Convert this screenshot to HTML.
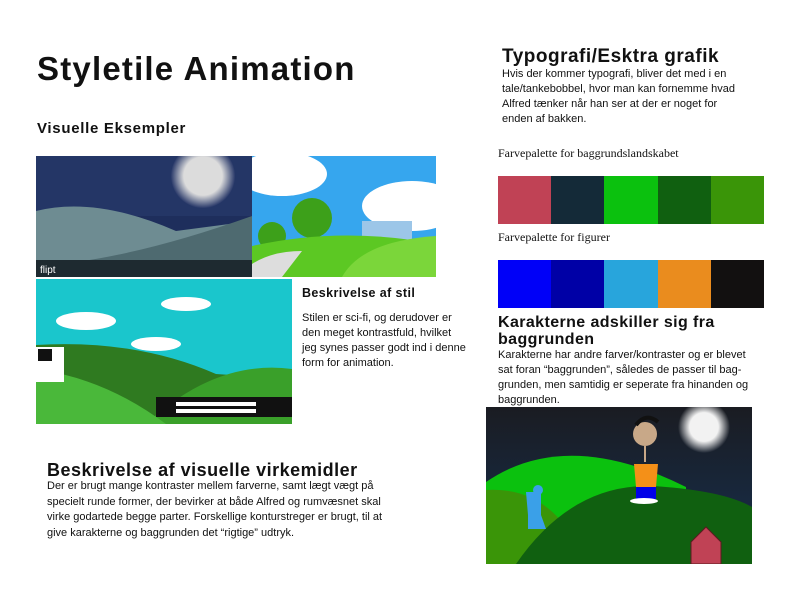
<!DOCTYPE html>
<html><head><meta charset="utf-8"><style>
*{margin:0;padding:0;box-sizing:border-box}
body{width:800px;height:600px;background:#fff;position:relative;overflow:hidden;font-family:"Liberation Sans",sans-serif;color:#111}
.a{position:absolute}
.h{font-weight:bold;letter-spacing:.7px;white-space:nowrap}
.p{font-size:11px;line-height:15px;white-space:nowrap}
.s{font-family:"Liberation Serif",serif;font-size:12px;white-space:nowrap}
.pal{display:flex;height:48px;width:266px}
.pal div{flex:1}
</style></head><body>
<div class="a h" style="left:37px;top:50px;font-size:33px;letter-spacing:1.2px">Styletile Animation</div>
<div class="a h" style="left:37px;top:120px;font-size:15px">Visuelle Eksempler</div>

<svg class="a" style="left:36px;top:156px" width="216" height="121">
<defs><radialGradient id="m"><stop offset="0.6" stop-color="#dcdcdc"/><stop offset="1" stop-color="#2a3a6a"/></radialGradient></defs>
<rect width="216" height="121" fill="#1e2e5c"/><rect width="216" height="60" fill="#2a3d70" opacity=".5"/>
<circle cx="167" cy="20" r="32" fill="url(#m)"/>
<path d="M0 55 Q60 40 140 75 L216 65 L216 121 L0 121Z" fill="#6e8c92"/>
<path d="M0 110 Q90 105 216 60 L216 121 L0 121Z" fill="#4e6a70"/>
<rect y="104" width="216" height="17" fill="#1e2a30"/>
<text x="4" y="117" fill="#fff" font-size="10" font-family="Liberation Sans">flipt</text>
</svg>
<svg class="a" style="left:252px;top:156px" width="184" height="121">
<rect width="184" height="121" fill="#36a6ee"/>
<ellipse cx="30" cy="18" rx="45" ry="22" fill="#fff"/><ellipse cx="160" cy="50" rx="50" ry="25" fill="#fff"/>
<rect x="110" y="65" width="50" height="25" fill="#9cc6e8"/>
<circle cx="60" cy="62" r="20" fill="#3da01a"/><circle cx="20" cy="80" r="14" fill="#3da01a"/>
<path d="M0 90 Q90 70 184 88 L184 121 L0 121Z" fill="#5cc823"/>
<path d="M0 121 L0 108 Q20 95 50 95 L30 121Z" fill="#ddd"/>
<path d="M90 121 Q110 85 184 80 L184 121Z" fill="#7bd63a"/>
</svg>
<svg class="a" style="left:36px;top:279px" width="256" height="145">
<rect width="256" height="145" fill="#1ac6cc"/>
<ellipse cx="50" cy="42" rx="30" ry="9" fill="#fff"/><ellipse cx="150" cy="25" rx="25" ry="7" fill="#fff"/><ellipse cx="120" cy="65" rx="25" ry="7" fill="#fff"/>
<path d="M0 66 Q100 60 180 95 L256 100 L256 145 L0 145Z" fill="#2f7a20"/>
<path d="M110 145 Q180 80 256 90 L256 145Z" fill="#3aa02a"/>
<path d="M0 90 Q70 100 130 145 L0 145Z" fill="#4ab83a"/>
<rect x="120" y="118" width="136" height="20" fill="#111"/><rect x="140" y="123" width="80" height="4" fill="#fff"/><rect x="140" y="130" width="80" height="4" fill="#fff"/>
<rect x="0" y="68" width="28" height="35" fill="#fff"/><rect x="2" y="70" width="14" height="12" fill="#111"/>
</svg>

<div class="a h" style="left:302px;top:286px;font-size:12.5px;letter-spacing:.4px">Beskrivelse af stil</div>
<div class="a p" style="left:302px;top:311px">Stilen er sci-fi, og derudover er<br>den meget kontrastfuld, hvilket<br>jeg synes passer godt ind i denne<br>form for animation.</div>

<div class="a h" style="left:47px;top:460px;font-size:18px;letter-spacing:.5px">Beskrivelse af visuelle virkemidler</div>
<div class="a p" style="left:47px;top:479px;line-height:15.5px">Der er brugt mange kontraster mellem farverne, samt lægt vægt på<br>specielt runde former, der bevirker at både Alfred og rumvæsnet skal<br>virke godartede begge parter. Forskellige konturstreger er brugt, til at<br>give karakterne og baggrunden det “rigtige” udtryk.</div>

<div class="a h" style="left:502px;top:46px;font-size:19px;letter-spacing:.5px">Typografi/Esktra grafik</div>
<div class="a p" style="left:502px;top:67px">Hvis der kommer typografi, bliver det med i en<br>tale/tankebobbel, hvor man kan fornemme hvad<br>Alfred tænker når han ser at der er noget for<br>enden af bakken.</div>

<div class="a s" style="left:498px;top:146px">Farvepalette for baggrundslandskabet</div>
<div class="a pal" style="left:498px;top:176px"><div style="background:#c04255"></div><div style="background:#142a38"></div><div style="background:#0bc10e"></div><div style="background:#106010"></div><div style="background:#3a9508"></div></div>
<div class="a s" style="left:498px;top:230px">Farvepalette for figurer</div>
<div class="a pal" style="left:498px;top:260px"><div style="background:#0000f8"></div><div style="background:#0000a6"></div><div style="background:#28a5dc"></div><div style="background:#ea8c1e"></div><div style="background:#121010"></div></div>

<div class="a h" style="left:498px;top:314px;font-size:16px;line-height:17px;letter-spacing:.4px">Karakterne adskiller sig fra<br>baggrunden</div>
<div class="a p" style="left:498px;top:348px">Karakterne har andre farver/kontraster og er blevet<br>sat foran “baggrunden”, således de passer til bag-<br>grunden, men samtidig er seperate fra hinanden og<br>baggrunden.</div>

<svg class="a" style="left:486px;top:407px" width="266" height="157">
<defs><linearGradient id="sk" x1="0" y1="0" x2="0" y2="1"><stop offset="0" stop-color="#1a1c22"/><stop offset="1" stop-color="#163050"/></linearGradient>
<radialGradient id="gl"><stop offset="0.55" stop-color="#f2f2f2"/><stop offset="1" stop-color="#f2f2f2" stop-opacity="0"/></radialGradient></defs>
<rect width="266" height="157" fill="url(#sk)"/>
<circle cx="218" cy="20" r="26" fill="url(#gl)"/>
<path d="M0 75 Q80 20 200 80 L200 157 L0 157Z" fill="#0bc10e"/>
<path d="M0 83 Q50 80 80 120 L80 157 L0 157Z" fill="#3a9508"/>
<path d="M30 157 Q90 70 180 80 Q240 85 266 100 L266 157Z" fill="#106010"/>
<circle cx="159" cy="27" r="12" fill="#c8a888"/><path d="M150 18 Q160 5 172 15" stroke="#111" stroke-width="4" fill="none"/>
<rect x="158" y="39" width="2" height="16" fill="#c8a888"/>
<path d="M148 57 L172 57 L170 80 L150 80Z" fill="#f49018"/>
<rect x="150" y="80" width="20" height="12" fill="#0000e8"/>
<ellipse cx="158" cy="94" rx="14" ry="3" fill="#fff"/>
<path d="M40 85 L55 85 L55 108 L60 122 L42 122 L42 108Z" fill="#3aa0e8"/>
<circle cx="52" cy="83" r="5" fill="#3aa0e8"/>
<path d="M205 135 L220 120 L235 135 L235 157 L205 157Z" fill="#c04255" stroke="#5a1a20" stroke-width="1"/>
</svg>
</body></html>
